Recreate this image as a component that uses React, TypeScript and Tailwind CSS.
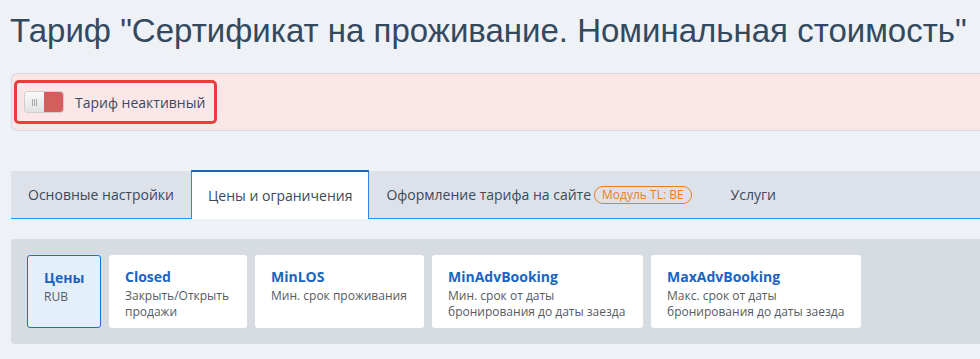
const tabs = [
  { label: 'Основные настройки', active: false },
  { label: 'Цены и ограничения', active: true },
  { label: 'Оформление тарифа на сайте', active: false, badge: 'Модуль TL: BE' },
  { label: 'Услуги', active: false },
];

const cards = [
  { title: 'Цены', sub: ['RUB'], active: true, w: 'w-[74px]' },
  { title: 'Closed', sub: ['Закрыть/Открыть', 'продажи'], w: 'w-[138px]' },
  { title: 'MinLOS', sub: ['Мин. срок проживания'], w: 'w-[169px]' },
  { title: 'MinAdvBooking', sub: ['Мин. срок от даты', 'бронирования до даты заезда'], w: 'w-[211px]' },
  { title: 'MaxAdvBooking', sub: ['Макс. срок от даты', 'бронирования до даты заезда'], w: 'w-[210px]' },
];

export default function App() {
  return (
    <div className="min-h-[359px] w-[980px] overflow-hidden bg-[#eef1f5] font-['Open_Sans',sans-serif] text-[#3a4a5c]">
      {/* Title */}
      <h1 className="whitespace-nowrap pl-[10px] pt-[11px] font-['Liberation_Sans',Arial,sans-serif] text-[33px] leading-[40px] text-[#34495e]">
        Тариф "Сертификат на проживание. Номинальная стоимость"
      </h1>

      {/* Status alert */}
      <div className="ml-[11px] mt-[22px] h-[58px] rounded-l-[6px] border border-r-0 border-[#d3dbe6] bg-[#fbe7e7] pl-[2px] pt-[6px]">
        <div className="flex h-[44px] w-[203px] items-center gap-[12px] rounded-[5px] border-[3px] border-[#ec3b3b] pl-[8px]">
          <div className="flex h-[20px] w-[38px] overflow-hidden rounded-[3px] shadow-[0_0_0_1px_#d0d0d0]">
            <div className="flex w-[19px] items-center justify-center gap-[1px] bg-gradient-to-b from-[#fafafa] to-[#e2e2e2]">
              <span className="h-[7px] w-px bg-[#aaa]" />
              <span className="h-[7px] w-px bg-[#aaa]" />
              <span className="h-[7px] w-px bg-[#aaa]" />
            </div>
            <div className="w-[19px] bg-[#d45e5e]" />
          </div>
          <span className="text-[14px] text-[#3a4a5c]">Тариф неактивный</span>
        </div>
      </div>

      {/* Tabs */}
      <div className="ml-[11px] mt-[40px] flex h-[48px] border-b border-[#2196f3] bg-[#dde2ea]">
        {tabs.map((t) => (
          <div
            key={t.label}
            className={`flex items-center gap-[3px] text-[14px] ${
              t.active
                ? '-mb-px mt-[-1px] border-x border-t-2 border-x-[#2a86e0] border-t-[#1565c0] bg-white px-[16px]'
                : 'px-[17px]'
            } ${t.label === 'Услуги' ? 'pl-[22px]' : ''}`}
          >
            {t.label}
            {t.badge && (
              <span className="rounded-full border border-[#e8801a] px-[7px] text-[12px] leading-[16px] text-[#e8801a]">
                {t.badge}
              </span>
            )}
          </div>
        ))}
      </div>

      {/* Restrictions panel */}
      <div className="ml-[11px] mt-[20px] flex h-[105px] gap-[8px] rounded-l-[4px] bg-[#d7dce3] pl-[16px] pt-[16px]">
        {cards.map((c) => (
          <div
            key={c.title}
            className={`h-[73px] shrink-0 rounded-[3px] pl-[16px] pt-[12px] ${c.w} ${
              c.active ? 'border border-[#1e6fd0] bg-[#e3f0fc] pt-[11px] pl-[15px]' : 'bg-white'
            }`}
          >
            <div className="text-[14px] font-bold leading-[20px] text-[#1a64c2]">{c.title}</div>
            <div className="mt-[1px] text-[12px] leading-[16px] text-[#555b63]">
              {c.sub.map((s) => (
                <div key={s} className="whitespace-nowrap">{s}</div>
              ))}
            </div>
          </div>
        ))}
      </div>
    </div>
  );
}
